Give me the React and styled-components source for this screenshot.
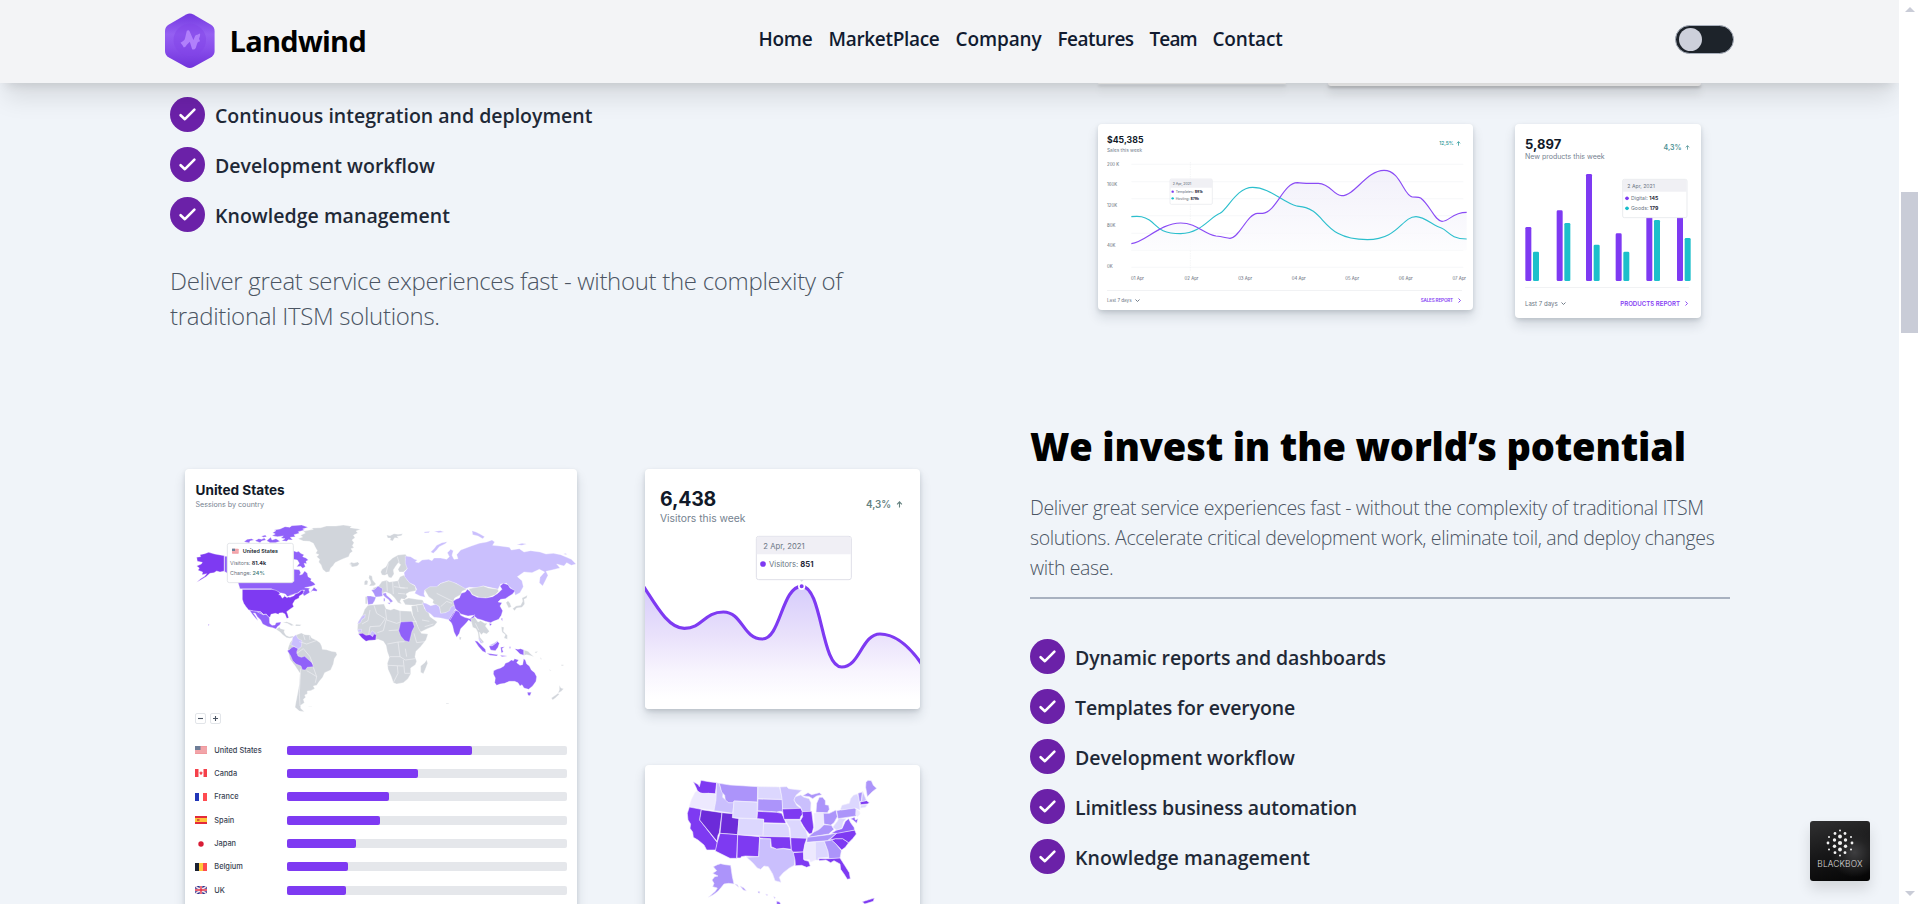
import React from "react";
import styled, { createGlobalStyle, css } from "styled-components";

const Global = createGlobalStyle`
  *, *::before, *::after { box-sizing: border-box; }
  html, body { margin: 0; padding: 0; overflow: hidden; }
  body { font-family: "Open Sans", "Noto Sans", sans-serif; background: #fff; }
  h2, p, ul { margin: 0; padding: 0; }
  ul { list-style: none; }
  svg { display: block; }
`;

/* ---------- page frame ---------- */
const Window = styled.div`
  display: flex;
  width: 100%;
  height: 904px;
`;
const Page = styled.div`
  position: relative;
  flex: 1;
  display: flex;
  flex-direction: column;
  overflow: hidden;
  background: #f0f4f9;
`;
const ScrollTrack = styled.div`
  width: 20px;
  display: flex;
  flex-direction: column;
  align-items: center;
  background: #fff;
  padding: 7px 0 3px 2px;
`;
const ScrollThumb = styled.div`
  width: 17px;
  height: 141px;
  margin: 180px 1px auto 0;
  background: #c9ccd7;
`;
const Arrow = styled.i`
  width: 0;
  height: 0;
  border: 5px solid transparent;
  ${(p) => (p.$down
    ? css`border-top-color: #c9ccd7; border-bottom: 0; margin-bottom: 5px;`
    : css`border-bottom-color: #c9ccd7; border-top: 0;`)}
`;

/* ---------- header ---------- */
const Header = styled.header`
  position: relative;
  z-index: 2;
  flex: none;
  display: flex;
  align-items: center;
  justify-content: space-between;
  height: 83px;
  padding: 0 165px 3px;
  background: #f3f4f6;
  box-shadow: 0 20px 25px -5px rgba(0, 0, 0, 0.1), 0 8px 10px -6px rgba(0, 0, 0, 0.1);
`;
const Brand = styled.div`
  display: flex;
  align-items: center;
  gap: 15px;
  width: 201px;
  padding-top: 1px;
`;
const BrandName = styled.span`
  font-size: 29px;
  line-height: 40px;
  font-weight: 700;
  letter-spacing: -0.75px;
  color: #000;
  padding-top: 1px;
`;
const Nav = styled.nav`
  display: flex;
  gap: 16px;
  padding-bottom: 2px;
`;
const NavLink = styled.a`
  width: ${(p) => p.$w}px;
  letter-spacing: ${(p) => p.$track}px;
  font-size: 19px;
  line-height: 28px;
  font-weight: 600;
  white-space: nowrap;
  color: #111b30;
`;
const Toggle = styled.div`
  width: 59px;
  height: 29px;
  padding: 2px 3px;
  margin-bottom: 1px;
  border: 1px solid #a9b0bd;
  border-radius: 15px;
  background: #1d232a;
`;
const Knob = styled.div`
  width: 23px;
  height: 23px;
  border-radius: 50%;
  background: #cdd0db;
`;

/* ---------- sections ---------- */
const Section = styled.section`
  flex: none;
  display: flex;
  align-items: flex-start;
  justify-content: space-between;
  padding: 0 169px 0 170px;
`;
const ServiceSection = styled(Section)`
  padding-right: 198px;
`;
const InvestSection = styled(Section)`
  padding-left: 185px;
  margin-top: 88px;
`;
const Copy = styled.div`
  width: ${(p) => p.$w}px;
`;
const Heading = styled.h2`
  font-size: 38px;
  line-height: 50px;
  font-weight: 800;
  letter-spacing: -0.17px;
  white-space: nowrap;
  color: #000;
`;
const Body = styled.p`
  margin-top: 22px;
  font-size: 19.5px;
  line-height: 30px;
  font-weight: 300;
  letter-spacing: -0.37px;
  color: #4b5563;
`;
const Lead = styled(Body)`
  margin-top: 31px;
  font-size: 24px;
  line-height: 35px;
  letter-spacing: -0.305px;
`;
const Rule = styled.div`
  height: 2px;
  margin-top: 14px;
  background: #a8b1c0;
`;
const CheckList = styled.ul`
  display: flex;
  flex-direction: column;
  gap: 15px;
  padding-top: ${(p) => p.$top}px;
`;
const CheckItem = styled.li`
  display: flex;
  gap: 10px;
  height: 35px;
  font-size: 19.5px;
  line-height: 37px;
  font-weight: 600;
  letter-spacing: ${(p) => p.$track || 0}px;
  color: #1f2937;
`;

/* ---------- cards ---------- */
const Stubs = styled.div`
  display: flex;
  align-items: flex-start;
  gap: 42px;
`;
const cardSurface = css`
  background: #fff;
  box-shadow: 0 7px 12px rgba(30, 41, 59, 0.14), 0 2px 4px rgba(30, 41, 59, 0.14);
  font-family: Inter, sans-serif;
`;
const Stub = styled.div`
  width: ${(p) => p.$w}px;
  height: ${(p) => p.$h}px;
  border-radius: 0 0 4px 4px;
  background: #fff;
  box-shadow: 0 2px 3px rgba(0, 0, 0, 0.22), 0 7px 9px rgba(0, 0, 0, 0.16);
`;
const Widgets = styled.div`
  width: 603px;
`;
const WidgetRow = styled.div`
  display: flex;
  align-items: flex-start;
  justify-content: space-between;
  margin-top: 38px;
`;
const Media = styled.div`
  display: flex;
  align-items: flex-start;
  gap: 68px;
  padding-top: 48px;
`;
const Stack = styled.div`
  display: flex;
  flex-direction: column;
  gap: 56px;
`;
const Card = styled.div`
  display: flex;
  flex-direction: column;
  width: ${(p) => p.$w}px;
  height: ${(p) => p.$h}px;
  border-radius: 4px;
  overflow: hidden;
  flex: none;
  ${cardSurface}
`;
const CardHead = styled.div`
  display: flex;
  justify-content: space-between;
  height: ${(p) => p.$h}px;
  padding: ${(p) => p.$pad};
  flex: none;
`;
const Title = styled.div`
  font-size: ${(p) => p.$s}px;
  line-height: ${(p) => p.$lh}px;
  letter-spacing: ${(p) => p.$track || 0}px;
  font-weight: 700;
  color: #111928;
`;
const Sub = styled.div`
  font-size: ${(p) => p.$s}px;
  line-height: ${(p) => p.$lh}px;
  color: #75828f;
  white-space: nowrap;
`;
const Delta = styled.div`
  display: flex;
  align-items: center;
  gap: ${(p) => p.$s * 0.5}px;
  height: ${(p) => p.$h}px;
  font-size: ${(p) => p.$s}px;
  font-weight: 600;
  color: ${(p) => p.$c};
`;
const CardFoot = styled.div`
  display: flex;
  flex: 1;
  align-items: center;
  justify-content: space-between;
  margin: ${(p) => p.$m};
  border-top: 1px solid #f1f2f4;
  font-size: ${(p) => p.$s}px;
  color: #6b7684;
`;
const FootItem = styled.span`
  display: flex;
  align-items: center;
  gap: ${(p) => (p.$link ? 4 : 3)}px;
  white-space: nowrap;
  ${(p) => p.$link && css`color: #8640f3; font-weight: 600; letter-spacing: ${p.$track || 0}px;`}
`;
const ZoomButtons = styled.div`
  display: flex;
  gap: 4px;
  padding-left: 10px;
`;
const ZoomButton = styled.div`
  width: 11px;
  height: 11px;
  border: 1px solid #e2e5e9;
  border-radius: 2px;
  display: grid;
  place-items: center;
`;
const Ranking = styled.div`
  display: flex;
  flex-direction: column;
  gap: 14.4px;
  padding: 21.5px 10px 0;
`;
const RankRow = styled.div`
  display: grid;
  grid-template-columns: 12px 72.3px 1fr;
  column-gap: 7.3px;
  align-items: center;
  height: 9px;
  font-size: 7.4px;
  line-height: 9px;
  font-weight: 500;
  color: #374151;
`;
const BarTrack = styled.div`
  height: 9px;
  margin-left: -7.3px;
  border-radius: 2px;
  background: #e5e7eb;
`;
const BarFill = styled.div`
  height: 9px;
  border-radius: 2px;
  background: #7e3af2;
`;

/* ---------- blackbox badge ---------- */
const Badge = styled.div`
  position: absolute;
  right: 29px;
  bottom: 23px;
  width: 60px;
  height: 60px;
  display: flex;
  flex-direction: column;
  align-items: center;
  padding-top: 7px;
  border-radius: 3px;
  background: radial-gradient(circle at 74% 52%, #3e3e40 0, #242425 24%, transparent 46%),
    linear-gradient(165deg, #303031, #171718 50%, #040404);
  box-shadow: 0 8px 14px rgba(0, 0, 0, 0.12);
`;
const BadgeText = styled.span`
  margin-top: 1px;
  font: 300 8.4px/11px Inter, sans-serif;
  letter-spacing: 0.15px;
  color: #dcdcdc;
`;

/* ---------- drawings ---------- */
const Logo = () => (
  <svg width="50" height="56" viewBox="0 0 150 166">
    <defs>
      <linearGradient id="hex" x1="0" y1="0" x2="0" y2="1">
        <stop offset="0" stopColor="#7338e0" />
        <stop offset=".38" stopColor="#9560f2" />
        <stop offset=".62" stopColor="#8a50ec" />
        <stop offset="1" stopColor="#7032db" />
      </linearGradient>
    </defs>
    <path fill="url(#hex)" d="M64 3Q75-3 86 3L138 33Q150 40 150 53V113Q150 126 138 133L86 162Q75 168 64 162L12 133Q0 126 0 113V53Q0 40 12 33Z" />
    <circle cx="75" cy="80" r="49" fill="#8144e8" opacity=".5" />
    <path fill="#b180fb" d="M66 52Q72 48 75 55L86 80L91 68Q93 64 98 64L105 60Q108 63 105 70L103 76L106 84Q98 85 97 91L93 104Q89 111 82 108L75 85L66 94Q62 101 57 103L53 96L47 88L55 83Q60 80 61 73Z" />
  </svg>
);
const Check = () => (
  <svg width="35" height="35" viewBox="0 0 35 35">
    <circle cx="17.5" cy="17.5" r="17.5" fill="#6b21a8" />
    <path d="M10.6 18.200L14.9 22.200L24.400 12.600" fill="none" stroke="#fff" strokeWidth="2.6" strokeLinecap="round" strokeLinejoin="round" />
  </svg>
);
const Up = ({ s }) => (
  <svg width={s} height={s} viewBox="0 0 10 10">
    <path d="M5 9.4V1.4M1.6 4.7L5 1.3L8.4 4.7" fill="none" stroke="currentColor" strokeWidth="1.6" />
  </svg>
);
const Chevron = ({ right }) => (
  <svg width="5" height="5" viewBox="0 0 10 10">
    <path d={right ? "M3 1L7 5L3 9" : "M1 3L5 7L9 3"} fill="none" stroke="currentColor" strokeWidth="1.9" />
  </svg>
);

const PURPLE = "M154 521C195 517 240 459 302 459C350 459 372 492 408 498C430 500 440 505 450 505C480 503 500 432 533 430H548C590 425 610 338 652 338C668 341 690 340 715 340C752 341 760 377 785 377C825 377 860 301 912 301C962 301 970 377 997 381C1010 382 1015 380 1022 384C1050 405 1065 454 1086 454C1110 454 1115 427 1160 427";
const TEAL = "M154 440C180 437 192 440 208 450C232 466 235 491 302 491C362 491 390 441 420 430C445 415 470 352 518 352C570 352 610 399 650 408C672 411 682 412 700 424C740 452 750 508 862 509C955 509 965 440 1008 440C1035 440 1060 468 1084 474C1105 482 1110 507 1160 507";

const SalesChart = () => (
  <svg width="375" height="129" viewBox="54 264 1125 387" fontFamily="Inter" fontSize="13" fill="#5b6673">
    <defs>
      <linearGradient id="sales" x1="0" y1="0" x2="0" y2="1">
        <stop offset="0" stopColor="#efedf9" />
        <stop offset="1" stopColor="#fcfcfe" />
      </linearGradient>
    </defs>
    {[283, 335, 386, 437, 490, 541, 592].map((y) => (
      <path key={y} d={`M154 ${y}H1150`} stroke="#f3f4f6" strokeWidth="2" />
    ))}
    <path d="M331 276V604" stroke="#e8eaed" strokeWidth="1.5" strokeDasharray="4 3" />
    <path d={`${PURPLE}V541H154Z`} fill="url(#sales)" opacity=".8" />
    <path d={TEAL} fill="none" stroke="#2cbfcd" strokeWidth="3.4" />
    <path d={PURPLE} fill="none" stroke="#8a4bf5" strokeWidth="3.4" />
    {["200 K", "160K", "120K", "80K", "40K", "0K"].map((t, i) => (
      <text key={t} x="81" y={288 + i * 61}>{t}</text>
    ))}
    {["01 Apr", "02 Apr", "03 Apr", "04 Apr", "05 Apr", "06 Apr", "07 Apr"].map((t, i) => (
      <text key={t} x={153 + i * 160.7} y="631">{t}</text>
    ))}
    <rect x="270" y="327" width="127" height="76" rx="4" fill="#fff" stroke="#e5e7eb" strokeWidth="2" />
    <path d="M271 353V331Q271 328 274 328H393Q396 328 396 331V353Z" fill="#f0f0f4" />
    <text x="278" y="345" fontSize="11" textLength="56">2 Apr, 2021</text>
    <circle cx="278" cy="365" r="3.6" fill="#7e3af2" />
    <circle cx="278" cy="385" r="3.6" fill="#16bdca" />
    <text x="287" y="369" fontSize="10.5">Templates: <tspan fontWeight="700" fill="#1f2937">$81k</tspan></text>
    <text x="287" y="389" fontSize="10.5">Hosting: <tspan fontWeight="700" fill="#1f2937">$79k</tspan></text>
  </svg>
);

const BARS = [[135, 681, 755], [229, 631, 669], [317, 522, 734], [406, 700, 755], [498, 640, 660], [590, 640, 714]];
const ProductsChart = () => (
  <svg width="186" height="113" viewBox="104 510 558 339" fontFamily="Inter" fontSize="15.5" fill="#6b7684">
    {BARS.map(([x, a, b]) => (
      <g key={x}>
        <rect x={x} y={a} width="18" height={843 - a} rx="4" fill="#7e3af2" />
        <rect x={x + 23} y={b} width="18" height={843 - b} rx="4" fill="#1cbfcb" />
      </g>
    ))}
    <rect x="427" y="538" width="193" height="115" rx="5" fill="#fff" stroke="#e5e7eb" strokeWidth="2.5" />
    <path d="M428 575V543Q428 539 432 539H615Q619 539 619 543V575Z" fill="#f0f0f4" />
    <text x="441" y="564">2 Apr, 2021</text>
    <circle cx="440" cy="595" r="5.5" fill="#7e3af2" />
    <circle cx="440" cy="625" r="5.5" fill="#16bdca" />
    <text x="452" y="601">Digital: <tspan fontWeight="700" fill="#1f2937">145</tspan></text>
    <text x="452" y="631">Goods: <tspan fontWeight="700" fill="#1f2937">179</tspan></text>
  </svg>
);

const WAVE = "M40 408C72 455 112 535 163 535C218 535 222 486 280 486C338 486 338 567 397 567C452 567 455 409 515 409C577 409 573 651 635 651C690 651 695 552 750 552C795 552 840 592 875 642";
const VisitorsChart = () => (
  <svg width="275" height="176" viewBox="45 249 825 528" fontFamily="Inter" fontSize="23" fill="#6b7684">
    <defs>
      <linearGradient id="wave" x1="0" y1="0" x2="0" y2="1">
        <stop offset="0" stopColor="#d6ccfb" />
        <stop offset=".4" stopColor="#e9e1fb" />
        <stop offset=".7" stopColor="#f8f5fe" />
        <stop offset=".92" stopColor="#ffffff" />
      </linearGradient>
    </defs>
    <path d={`${WAVE}V777H40Z`} fill="url(#wave)" />
    <path d={WAVE} fill="none" stroke="#7e3af2" strokeWidth="9.5" />
    <circle cx="515" cy="409" r="8.5" fill="#7e3af2" stroke="#fff" strokeWidth="5" />
    <path d="M508 388H523L515 395Z" fill="#d9dbe2" />
    <rect x="379" y="259" width="285" height="130" rx="7" fill="#fff" stroke="#dfdfe8" strokeWidth="3" />
    <path d="M380.5 313V266Q380.5 260.5 386 260.5H657Q662.5 260.5 662.5 266V313Z" fill="#f0eff5" />
    <text x="400" y="296" textLength="124">2 Apr, 2021</text>
    <circle cx="399" cy="342" r="8.5" fill="#7e3af2" />
    <text x="417" y="350">Visitors: <tspan fontWeight="700" fill="#1f2937">851</tspan></text>
  </svg>
);

const G = "#d1d5db", MID = "#9061f9", DARK = "#7e3af2", SOFT = "#ac94fa", PALE = "#cabffd";
const WORLD = [
  /* greenland, iceland, svalbard */
  [G, "M384 236L398 231 392 226 406 219 400 214 430 208 425 204 452 203 470 198 498 198 520 195 545 199 540 203 572 208 558 213 563 219 550 226 555 233 546 240 552 248 547 257 552 263 543 266 548 274 540 280 536 290 520 296 505 303 495 308 489 317 482 324 478 335 468 337 458 328 453 314 446 306 449 298 440 290 447 284 437 280 442 272 436 262 430 250 418 244 400 243Z"],
  [G, "M537 312L543 309 541 306 552 309 563 306 568 311 562 318 548 321 541 317 545 315Z"],
  [G, "M650 225L660 227 672 221 684 223 698 221 694 227 681 229 686 235 674 233 668 243 660 240 662 234 653 234Z"],
  /* canada */
  [MID, "M308 218L318 212 312 210 330 207 345 200 360 202 365 197 395 195 414 202 398 207 404 210 385 215 388 220 372 224 376 230 361 232 368 240 355 239 350 244 335 242 345 236 333 234 340 228 322 230 306 227 316 222Z"],
  [MID, "M222 245L232 238 245 236 252 240 240 243 238 249ZM255 242L266 236 275 238 283 234 288 240 275 243 270 248ZM274 229L286 225 290 230 280 232ZM290 242L302 232 306 240 318 236 330 244 316 248 300 248Z"],
  [MID, "M370 272L380 276 386 274 392 280 402 284 398 290 408 294 415 300 408 304 410 311 402 310 406 320 398 325 392 319 380 320 388 310 382 300 370 298Z"],
  [MID, "M163 289H172V340L163 334Z"],
  [MID, "M203 364H372V328L388 329 392 338 389 345 397 343 404 333 412 340 414 350 424 356 422 362 432 368 436 374 424 379 404 383 420 385 416 389 420 398 432 382 442 390 440 394 428 392 412 402 402 408 398 400 404 390 392 392 383 399 374 402 362 410 346 414 338 403 328 397 305 387H210Z"],
  /* usa */
  [DARK, "M217 388L305 388 318 391 328 397 331 404 336 413 346 408 350 413 362 405 375 402 385 399 396 390 402 393 398 402 388 408 387 414 375 420 368 432 371 440 362 446 350 455 353 463 356 474 350 475 345 462 338 458 328 459 325 463 316 460 303 463 300 472 294 470 289 462 280 463 272 455 250 453 236 450 228 440 221 430 217 418Z"],
  ["#fff", "M326 404L334 399 346 402 354 412 347 410 343 406 338 415 335 406ZM352 410L364 406 376 402 372 407 360 412Z"],
  [DARK, "M80 292L92 290 90 284 104 281 116 277 134 282 163 287V333L150 336 140 333 132 338 120 340 108 350 98 356 80 367 92 356 104 349 110 341 96 344 98 336 84 331 88 324 80 318 94 312 97 307 82 304Z"],
  /* mexico and central america */
  [MID, "M238 450L250 453 270 455 280 464 288 463 298 473 299 490 306 496 315 495 318 488 333 486 330 494 322 500 318 507 308 503 294 500 278 492 272 480 262 470 256 460 250 459 258 470 264 482 256 474 248 464Z"],
  [G, "M318 508L328 501 332 506 344 509 342 516 348 526 358 530 368 528 371 532 360 535 350 533 338 524 330 516Z"],
  [G, "M338 488L350 485 362 490 372 496 364 497 352 490ZM378 493L394 494 390 498 376 498Z"],
  /* south america */
  [G, "M372 532L380 524 394 519 405 524 420 525 425 534 438 540 450 548 455 558 457 568 470 569 484 574 498 576 501 584 493 596 490 612 482 630 464 638 458 652 448 664 440 676 430 678 434 686 422 692 412 693 412 702 404 705 407 712 400 718 403 728 392 736 392 745 403 755 388 753 375 742 378 725 383 700 388 672 390 640 374 616 360 598 356 580 354 565 360 548Z"],
  [PALE, "M368 532L378 524 384 536 396 542 394 560 384 568 374 560 362 554 366 545Z"],
  [MID, "M352 572L360 568 366 562 372 560 384 566 380 576 384 588 394 592 404 589 414 598 426 608 430 620 412 622 406 630 397 629 393 618 378 612 368 602 362 588 356 578Z"],
  /* europe */
  [G, "M598 345L606 348 608 360 618 372 612 377 597 378 603 370 600 360 596 354ZM583 365L588 360 594 364 592 374 583 375Z"],
  [G, "M632 336L636 328 648 320 655 306 668 294 684 285 706 283 712 290 707 298 713 316 711 328 700 336 688 336 684 328 692 314 685 308 676 320 670 330 672 342 664 354 656 352 652 342 645 346 636 345Z"],
  [G, "M608 384L626 378 636 364 650 361 658 366 684 362 690 350 703 345 712 360 722 370 736 378 738 392 718 396 708 402 712 410 704 418 694 416 690 424 695 432 684 428 674 414 662 402 648 396 636 400 622 398Z"],
  [SOFT, "M604 390L614 388 624 378 638 386 636 396 638 408 628 410 616 411 611 400Z"],
  [SOFT, "M590 408L602 408 618 412 614 422 608 432 594 434Z"],
  [SOFT, "M637 401L648 398 650 406 662 416 669 424 662 428 656 419 644 410ZM652 428L662 428 658 433ZM641 415L645 415 645 424 641 424Z"],
  [G, "M586 410L591 410 591 432 586 431ZM698 421L716 414 740 418 758 420 764 432 745 434 730 436 706 434Z"],
  /* africa */
  [G, "M594 436L612 434 642 432 648 446 662 450 672 446 690 452 724 454 726 462 734 478 744 498 754 520 774 522 768 540 752 560 738 574 735 590 740 604 736 614 722 624 722 642 714 656 700 668 680 672 670 668 664 650 654 628 652 610 658 592 652 575 648 556 640 544 624 538 600 542 582 536 566 520 562 510 564 486 578 464 584 448Z"],
  [G, "M752 618L764 608 770 599 773 610 766 628 760 641 752 637Z"],
  [PALE, "M562 492L566 484 576 468 586 463 584 474 576 478 572 488ZM598 526L606 512 618 520 612 528 600 528ZM564 508L575 508 574 516 564 516Z"],
  [DARK, "M565 521L578 520 588 526 600 524 608 530 612 522 619 524 617 540 598 541 588 544 576 534Z"],
  [MID, "M692 486L728 484 733 500 726 514 722 530 718 546 704 542 692 528 686 512Z"],
  /* middle east and central asia */
  [G, "M724 438L748 434 760 432 764 446 776 458 780 470 802 486 792 498 772 506 752 516 746 506 738 486 728 466Z"],
  [G, "M763 388L778 378 806 376 812 370 836 362 848 364 858 370 884 382 890 388 876 394 872 404 854 414 850 426 856 440 846 448 836 456 812 462 808 440 796 434 788 428 790 420 776 410 770 400Z"],
  [PALE, "M757 428L768 430 782 437 798 433 808 440 812 460 826 458 838 452 842 442 852 436 858 444 850 460 842 470 838 480 812 474 792 472 782 462 768 454Z"],
  /* russia */
  [PALE, "M706 288L722 290 734 298 742 300 736 306 746 308 756 300 776 298 786 302 792 294 812 294 830 298 838 290 832 278 842 268 850 272 846 286 852 298 864 296 860 284 872 270 888 264 904 258 928 250 950 246 966 240 974 246 968 256 990 258 1018 262 1024 270 1048 266 1062 276 1082 272 1110 276 1128 282 1150 280 1172 284 1190 292 1204 298 1218 312 1204 316 1190 308 1182 318 1160 312 1170 324 1146 330 1128 334 1134 346 1126 362 1118 378 1108 368 1110 352 1124 336 1108 328 1086 338 1062 336 1042 350 1056 362 1060 380 1050 398 1036 406 1032 392 1018 380 1010 370 992 372 984 388 968 384 940 378 922 384 898 382 886 386 858 370 836 362 812 370 800 380 780 380 764 390 762 402 766 412 750 408 734 400 740 388 734 376 718 368 704 350 702 338 712 326 706 310Z"],
  [PALE, "M782 276L792 266 800 256 816 248 832 245 826 251 808 260 800 270 790 280ZM906 212L918 216 930 222 944 230 938 236 924 228 908 224ZM762 216L780 214 776 218 764 219ZM792 214L812 212 822 216 806 218ZM1040 254L1056 250 1070 252 1056 256ZM1180 282L1188 280 1190 284Z"],
  [G, "M896 386L922 382 940 378 956 384 984 388 986 394 976 404 950 414 928 412 908 404Z"],
  [MID, "M849 424L858 418 868 414 874 400 886 396 892 388 900 394 906 404 922 412 948 414 968 410 984 400 996 388 990 378 1000 370 1014 374 1020 384 1035 392 1028 402 1018 408 1006 416 992 418 984 426 996 428 990 438 998 452 994 466 986 478 970 484 962 488 946 484 936 480 922 476 910 466 894 468 872 462 856 446Z"],
  [MID, "M836 480L846 464 856 450 868 456 872 466 884 472 900 476 914 464 912 476 904 486 896 480 888 490 872 506 868 520 860 532 852 516 848 498 844 488Z"],
  [MID, "M958 490L966 492 960 498ZM993 476L997 474 997 484Z"],
  [G, "M902 476L914 472 924 486 932 482 944 490 952 490 946 498 958 514 950 522 940 518 934 524 928 516 930 532 942 546 938 550 926 536 924 518 918 506 908 502ZM868 530L874 532 872 540 868 538Z"],
  [G, "M1028 446L1038 438 1052 436 1058 424 1056 414 1064 410 1072 406 1070 414 1062 418 1064 432 1056 442 1040 444 1034 452ZM1008 428L1014 422 1020 430 1024 440 1016 444ZM994 500L1002 502 1000 514 1012 526 1012 538 1002 534 1006 524 996 516Z"],
  /* indonesia and oceania */
  [MID, "M914 542L922 544 934 556 946 568 948 578 938 574 926 560ZM950 580L968 582 984 584 980 588 960 586ZM957 558L968 556 982 544 988 550 984 562 976 572 962 570ZM992 562L1004 560 996 566 1000 576 994 578ZM990 586L1012 588 996 590ZM1034 566L1044 568 1052 566 1062 570 1062 586 1050 582 1042 574ZM1018 560L1022 560 1020 568Z"],
  [PALE, "M924 534L930 538 938 550 932 550ZM958 556L974 548 984 540 980 548 966 558Z"],
  [G, "M1062 570L1074 574 1082 582 1092 590 1078 586 1070 584 1062 586ZM1094 576L1104 574 1098 580Z"],
  [MID, "M971 632L980 628 992 624 1002 618 1006 610 1016 606 1024 600 1030 602 1034 596 1046 600 1040 608 1050 616 1058 614 1061 596 1066 600 1070 612 1078 618 1084 630 1094 638 1100 650 1098 664 1088 678 1076 688 1062 684 1056 674 1050 678 1044 668 1034 664 1018 664 1004 670 990 672 980 676 974 668 976 654 970 642Z"],
  [MID, "M1072 697L1084 697 1080 707 1074 706ZM114 492L118 494 116 498Z"],
  [G, "M1168 676L1173 684 1181 686 1174 694 1164 700 1168 690ZM1144 714L1156 706 1164 700 1168 703 1156 714 1148 720ZM828 730H836V732H828ZM1174 614H1180V617H1174ZM416 740H426V741H416ZM1110 592L1116 598 1112 598ZM1138 628L1144 632 1140 632Z"],
];
const BORDERS =
  "M163 288V334M205 387H305M262 456L280 464M388 545L410 552 438 542M380 580L400 566 420 590 428 612M392 626L388 700 390 738M430 622L440 650 436 668M410 632L424 640 440 650M400 524L405 540M418 526L420 540M600 450L594 482 576 492M612 436L620 460 646 476 630 498 600 500 596 524M646 448L650 480 680 490 692 486M690 452L691 486M725 485H740M648 480L640 512 622 518M656 512L684 510M652 552L684 546 704 545M660 590L690 590 706 600 736 596M684 546L690 590M706 566L710 590M654 616L700 618M682 618L684 640 670 668M700 600L704 640 720 640M732 520L740 548 764 545M650 362L652 394M668 366L670 402M684 362L690 384 714 384M672 380L704 384M684 400L706 402M655 310L648 340M682 290L688 310M740 436L744 456M756 480L778 484M800 400L840 420 850 424M812 440L830 424 846 430M916 490L926 510M764 500L790 492M858 450L840 480M1062 568V588";

const WorldMap = () => (
  <svg width="392" height="193" viewBox="45 180 1176 579" fontFamily="Inter">
    {WORLD.map(([fill, d], i) => (
      <path key={i} d={d} fill={fill} stroke="#fff" strokeWidth="1" strokeLinejoin="round" />
    ))}
    <path d={BORDERS} fill="none" stroke="#f4f5f8" strokeWidth="1.7" />
    <rect x="172" y="250" width="198" height="118" rx="6" fill="#fff" stroke="#dfe1e6" strokeWidth="2.5" />
    <g transform="translate(186 266)">
      <rect width="20" height="15" rx="2" fill="#f29aa0" />
      <path d="M0 4H20M0 8.5H20M0 13H20" stroke="#f7c1c5" strokeWidth="1.5" />
      <rect width="9" height="7" fill="#69809a" />
    </g>
    <text x="218" y="279" fontSize="16" fontWeight="600" fill="#111928" textLength="106">United States</text>
    <text x="180" y="314" fontSize="16" fill="#6b7280">Visitors: <tspan fontWeight="700" fill="#1f2937">81.4k</tspan></text>
    <text x="180" y="345" fontSize="16" fill="#6b7280">Change: <tspan fontWeight="600" fill="#4b7f7d">24%</tspan></text>
  </svg>
);

const VP = "#ede9fe", LP = "#dcd7fe", DD = "#6c2bd9";
const STATES = [
  [DARK, "190,95 198,100 205,104 208,110 213,91 236,95 260,98 256,131 235,130 222,132 210,128 203,124 198,112"],
  [VP, "196,126 203,124 212,130 235,130 256,133 259,140 252,181 178,170 184,150"],
  [PALE, "260,98 268,100 273,118 279,130 278,142 288,150 296,158 312,157 308,190 252,182 258,150"],
  [SOFT, "268,100 300,105 383,110 382,156 312,153 310,158 296,158 286,150 284,136 275,126"],
  [LP, "312,153 382,157 381,206 308,203"],
  [LP, "384,110 448,111 453,130 457,148 384,146"],
  [SOFT, "384,147 457,149 458,185 450,184 440,186 383,182"],
  [DARK, "383,184 440,187 455,190 462,205 468,220 401,218 401,208 381,206"],
  [DARK, "178,171 214,178 209,210 262,278 258,300 230,300 222,285 204,270 190,262 188,246 180,235 182,222 174,210 172,190"],
  [DD, "214,179 276,188 268,248 264,256 261,274 209,210"],
  [DD, "276,188 308,191 307,203 327,206 323,254 270,250"],
  [DARK, "270,250 323,254 320,325 300,325 256,303 262,276"],
  [DARK, "323,254 389,260 386,320 346,318 334,320 332,324 321,324"],
  [PALE, "389,266 422,267 422,292 440,297 460,296 484,299 492,306 495,330 493,346 478,354 460,368 448,382 453,397 435,392 428,372 415,350 402,348 392,358 382,354 368,338 350,322 386,320"],
  [LP, "327,205 401,208 399,258 323,254"],
  [LP, "401,220 470,222 476,232 480,260 399,258"],
  [DARK, "389,259 480,261 484,298 460,295 440,297 424,290 422,266 389,264"],
  [PALE, "450,111 470,110 476,116 515,121 498,136 492,150 500,166 512,175 458,177 456,145"],
  [DARK, "457,177 512,175 520,190 512,200 510,208 462,208"],
  [LP, "466,210 510,210 516,226 528,242 534,262 526,266 482,263 480,234"],
  [DARK, "482,263 530,265 524,285 520,306 488,306 484,298"],
  [DARK, "490,308 520,306 522,330 536,334 541,348 530,352 515,346 496,347 495,330"],
  [PALE, "496,140 512,135 522,142 537,146 543,158 542,185 518,185 511,170 498,160 492,150"],
  [DARK, "516,185 545,184 551,232 546,250 538,252 528,240 520,228 511,212 518,200"],
  [SOFT, "518,137 534,128 545,134 568,128 576,134 560,138 548,146 538,140"],
  [SOFT, "560,160 568,142 578,142 586,152 586,164 596,166 598,178 592,188 558,187"],
  [VP, "552,190 580,188 580,226 568,238 552,246 554,220"],
  [SOFT, "580,190 598,190 618,180 622,200 612,218 602,226 582,222"],
  [SOFT, "540,256 552,246 568,238 582,224 604,226 612,238 596,252 536,262"],
  [SOFT, "532,262 596,254 622,248 606,262 592,272 530,277"],
  [VP, "526,278 555,276 555,330 542,336 538,328 521,328 522,300"],
  [LP, "556,276 583,274 594,304 595,322 564,324 566,330 556,330"],
  [SOFT, "583,274 605,270 618,282 634,302 630,325 597,326 594,304"],
  [DARK, "566,326 597,326 630,324 644,346 658,368 661,386 652,388 642,372 632,358 630,342 612,332 602,338 588,330 568,332"],
  [DARK, "605,270 616,266 638,266 656,278 646,292 635,300 618,282"],
  [DARK, "598,270 622,248 674,240 679,252 668,266 656,278 638,266 616,266"],
  [MID, "604,250 620,240 636,236 646,214 656,206 662,218 672,232 674,240 622,250"],
  [LP, "608,232 622,214 626,206 648,206 640,216 636,234 620,240"],
  [SOFT, "620,182 672,172 684,184 678,198 624,206"],
  [LP, "632,176 636,166 658,160 662,146 670,136 682,132 688,152 690,180 676,174 634,180"],
  [SOFT, "684,130 697,126 694,154 688,155"],
  [PALE, "698,124 708,148 706,154 695,155"],
  [SOFT, "707,112 708,97 714,91 724,92 730,106 740,115 726,126 712,140"],
  [DARK, "690,156 710,152 718,158 712,162 692,164"],
  [LP, "692,166 712,164 706,172 692,174"],
  [VP, "678,178 688,184 690,192 682,200 677,194"],
  [MID, "662,206 674,202 676,210 684,206 680,220 672,212"],
  [SOFT, "250,350 262,344 272,341 286,344 302,346 307,380 312,402 296,400 282,402 274,412 264,424 250,434 235,442 256,424 262,414 248,410 252,400 246,390 254,380 264,378 248,370 260,362"],
  [SOFT, "314,402 322,404 326,412"], [SOFT, "330,408 342,414 349,423 340,420"],
  [SOFT, "384,424 390,425 388,430 384,428"], [SOFT, "407,432 413,434 411,437"], [SOFT, "431,440 436,442 434,446"],
  [MID, "440,453 449,456 453,464 440,464"],
  [DARK, "697,455 720,448 733,444 730,454 704,462"],
];
const UsMap = () => (
  <svg width="275" height="139" viewBox="45 45 825 417">
    {STATES.map(([fill, pts], i) => (
      <polygon key={i} points={pts} fill={fill} stroke="#f1eefe" strokeWidth="1.8" strokeLinejoin="round" />
    ))}
  </svg>
);

const FLAGS = {
  us: <><rect width="12" height="8" fill="#f0999d" /><path d="M0 2H12M0 4H12M0 6H12" stroke="#f6bcc0" strokeWidth=".7" /><rect width="5.5" height="4" fill="#6d7d97" /></>,
  ca: <><rect width="12" height="8" fill="#fff" /><path d="M0 0H3.5V8H0ZM8.5 0H12V8H8.5ZM6 2L6.7 3.3 8 3.8 6.8 5 6.3 6H5.7L5.2 5 4 3.8 5.3 3.3Z" fill="#f5404a" /></>,
  fr: <><rect width="12" height="8" fill="#fff" /><rect width="4" height="8" fill="#2236b8" /><rect x="8" width="4" height="8" fill="#ff4b50" /></>,
  es: <><rect width="12" height="8" fill="#e3293b" /><rect y="2" width="12" height="4" fill="#ffc53a" /><rect x="2" y="3" width="2.5" height="2" fill="#d9563c" /></>,
  jp: <><rect width="12" height="8" fill="#fff" /><circle cx="6" cy="4" r="2.7" fill="#d81c35" /></>,
  be: <><rect width="12" height="8" fill="#ffc93c" /><rect width="4" height="8" fill="#1b2233" /><rect x="8" width="4" height="8" fill="#ff4b50" /></>,
  uk: <><rect width="12" height="8" fill="#2b2f8e" /><path d="M0 0L12 8M12 0L0 8" stroke="#f3dfe6" strokeWidth="1.5" /><path d="M6 0V8M0 4H12" stroke="#fff" strokeWidth="2.6" /><path d="M6 0V8M0 4H12" stroke="#e22f46" strokeWidth="1.4" /></>,
};
const COUNTRIES = [
  ["us", "United States", 66.1], ["ca", "Canda", 46.9], ["fr", "France", 36.5], ["es", "Spain", 33.3],
  ["jp", "Japan", 24.6], ["be", "Belgium", 21.9], ["uk", "UK", 21.1],
];

const DOTS = [[0, -12.5, 1], [-5, -9.5, 1.4], [5, -9.5, 1.4], [-11, -6, 1], [0, -6.5, 1.9], [11, -6, 1], [-5.5, -3, 1.7], [5.5, -3, 1.7], [-12, 0, 1.4], [0, 0, 2.1], [12, 0, 1.4], [-5.5, 3.3, 1.7], [5.5, 3.3, 1.7], [-11, 6.5, 1], [0, 6.5, 1.9], [11, 6.5, 1], [-5, 9.7, 1.4], [5, 9.7, 1.4], [0, 12.5, 1]];

const NAV = [["Home", 54, -0.25], ["MarketPlace", 111, -0.32], ["Company", 86, -0.11], ["Features", 76, -0.5], ["Team", 47, -0.9], ["Contact", 70, -0.17]];
const SERVICE = [["Continuous integration and deployment", 0], ["Development workflow", 0.03], ["Knowledge management", 0.04]];
const INVEST = [["Dynamic reports and dashboards", -0.075], ["Templates for everyone", -0.13], ["Development workflow", 0.03], ["Limitless business automation", -0.15], ["Knowledge management", 0.04]];

const Checks = ({ items, top }) => (
  <CheckList $top={top}>
    {items.map(([label, track]) => (
      <CheckItem key={label} $track={track}><Check />{label}</CheckItem>
    ))}
  </CheckList>
);

export default function App() {
  return (
    <Window>
      <Global />
      <Page>
        <Header>
          <Brand><Logo /><BrandName>Landwind</BrandName></Brand>
          <Nav>
            {NAV.map(([label, w, track]) => <NavLink key={label} $w={w} $track={track}>{label}</NavLink>)}
          </Nav>
          <Toggle><Knob /></Toggle>
        </Header>

        <ServiceSection>
          <Copy $w={700}>
            <Checks items={SERVICE} top={14} />
            <Lead>Deliver great service experiences fast - without the complexity of traditional ITSM solutions.</Lead>
          </Copy>
          <Widgets>
            <Stubs><Stub $w={188} $h={1} /><Stub $w={373} $h={3} /></Stubs>
            <WidgetRow>
              <Card $w={375} $h={186}>
                <CardHead $h={34} $pad="10px 12px 0 9px">
                  <div><Title $s={8.7} $lh={12}>$45,385</Title><Sub $s={4.8} $lh={8}>Sales this week</Sub></div>
                  <Delta $s={4.8} $h={18} $c="#2f9a9a">12,5% <Up s={5} /></Delta>
                </CardHead>
                <SalesChart />
                <CardFoot $m="3px 11px 0 9px" $s={4.6}>
                  <FootItem>Last 7 days <Chevron /></FootItem>
                  <FootItem $link $track={-0.15}>SALES REPORT <Chevron right /></FootItem>
                </CardFoot>
              </Card>
              <Card $w={186} $h={194}>
                <CardHead $h={46} $pad="12px 11px 0 10px">
                  <div><Title $s={13} $lh={16}>5,897</Title><Sub $s={7} $lh={10}>New products this week</Sub></div>
                  <Delta $s={7} $h={23} $c="#4a8f93">4,3% <Up s={5} /></Delta>
                </CardHead>
                <ProductsChart />
                <CardFoot $m="4px 12px 0 10px" $s={6.1}>
                  <FootItem>Last 7 days <Chevron /></FootItem>
                  <FootItem $link>PRODUCTS REPORT <Chevron right /></FootItem>
                </CardFoot>
              </Card>
            </WidgetRow>
          </Widgets>
        </ServiceSection>

        <InvestSection>
          <Media>
            <Card $w={392} $h={460}>
              <CardHead $h={51} $pad="12px 10px 0 10.5px">
                <div><Title $s={13.6} $lh={18}>United States</Title><Sub $s={7.15} $lh={12}>Sessions by country</Sub></div>
              </CardHead>
              <WorldMap />
              <ZoomButtons>
                <ZoomButton><svg width="7" height="7" viewBox="0 0 7 7"><path d="M1 3.5H6" stroke="#4b5563" strokeWidth="1.1" /></svg></ZoomButton>
                <ZoomButton><svg width="7" height="7" viewBox="0 0 7 7"><path d="M1 3.5H6M3.5 1V6" stroke="#4b5563" strokeWidth="1.1" /></svg></ZoomButton>
              </ZoomButtons>
              <Ranking>
                {COUNTRIES.map(([flag, name, pct]) => (
                  <RankRow key={name}>
                    <svg width="12" height="8" viewBox="0 0 12 8">{FLAGS[flag]}</svg>
                    <span>{name}</span>
                    <BarTrack><BarFill style={{ width: `${pct}%` }} /></BarTrack>
                  </RankRow>
                ))}
              </Ranking>
            </Card>
            <Stack>
              <Card $w={275} $h={240}>
                <CardHead $h={64} $pad="18px 17px 0 15px">
                  <div><Title $s={19.5} $lh={25} $track={-0.2}>6,438</Title><Sub $s={10.3} $lh={12}>Visitors this week</Sub></div>
                  <Delta $s={9.8} $h={34} $c="#64817f">4,3% <Up s={7} /></Delta>
                </CardHead>
                <VisitorsChart />
              </Card>
              <Card $w={275} $h={170}><UsMap /></Card>
            </Stack>
          </Media>
          <Copy $w={700}>
            <Heading>We invest in the world’s potential</Heading>
            <Body>Deliver great service experiences fast - without the complexity of traditional ITSM solutions. Accelerate critical development work, eliminate toil, and deploy changes with ease.</Body>
            <Rule />
            <Checks items={INVEST} top={40} />
          </Copy>
        </InvestSection>

        <Badge>
          <svg width="30" height="30" viewBox="-15 -15 30 30">
            {DOTS.map(([x, y, r], i) => <circle key={i} cx={x} cy={y} r={r} fill="#f2f2f2" />)}
          </svg>
          <BadgeText>BLACKBOX</BadgeText>
        </Badge>
      </Page>
      <ScrollTrack><Arrow /><ScrollThumb /><Arrow $down /></ScrollTrack>
    </Window>
  );
}
